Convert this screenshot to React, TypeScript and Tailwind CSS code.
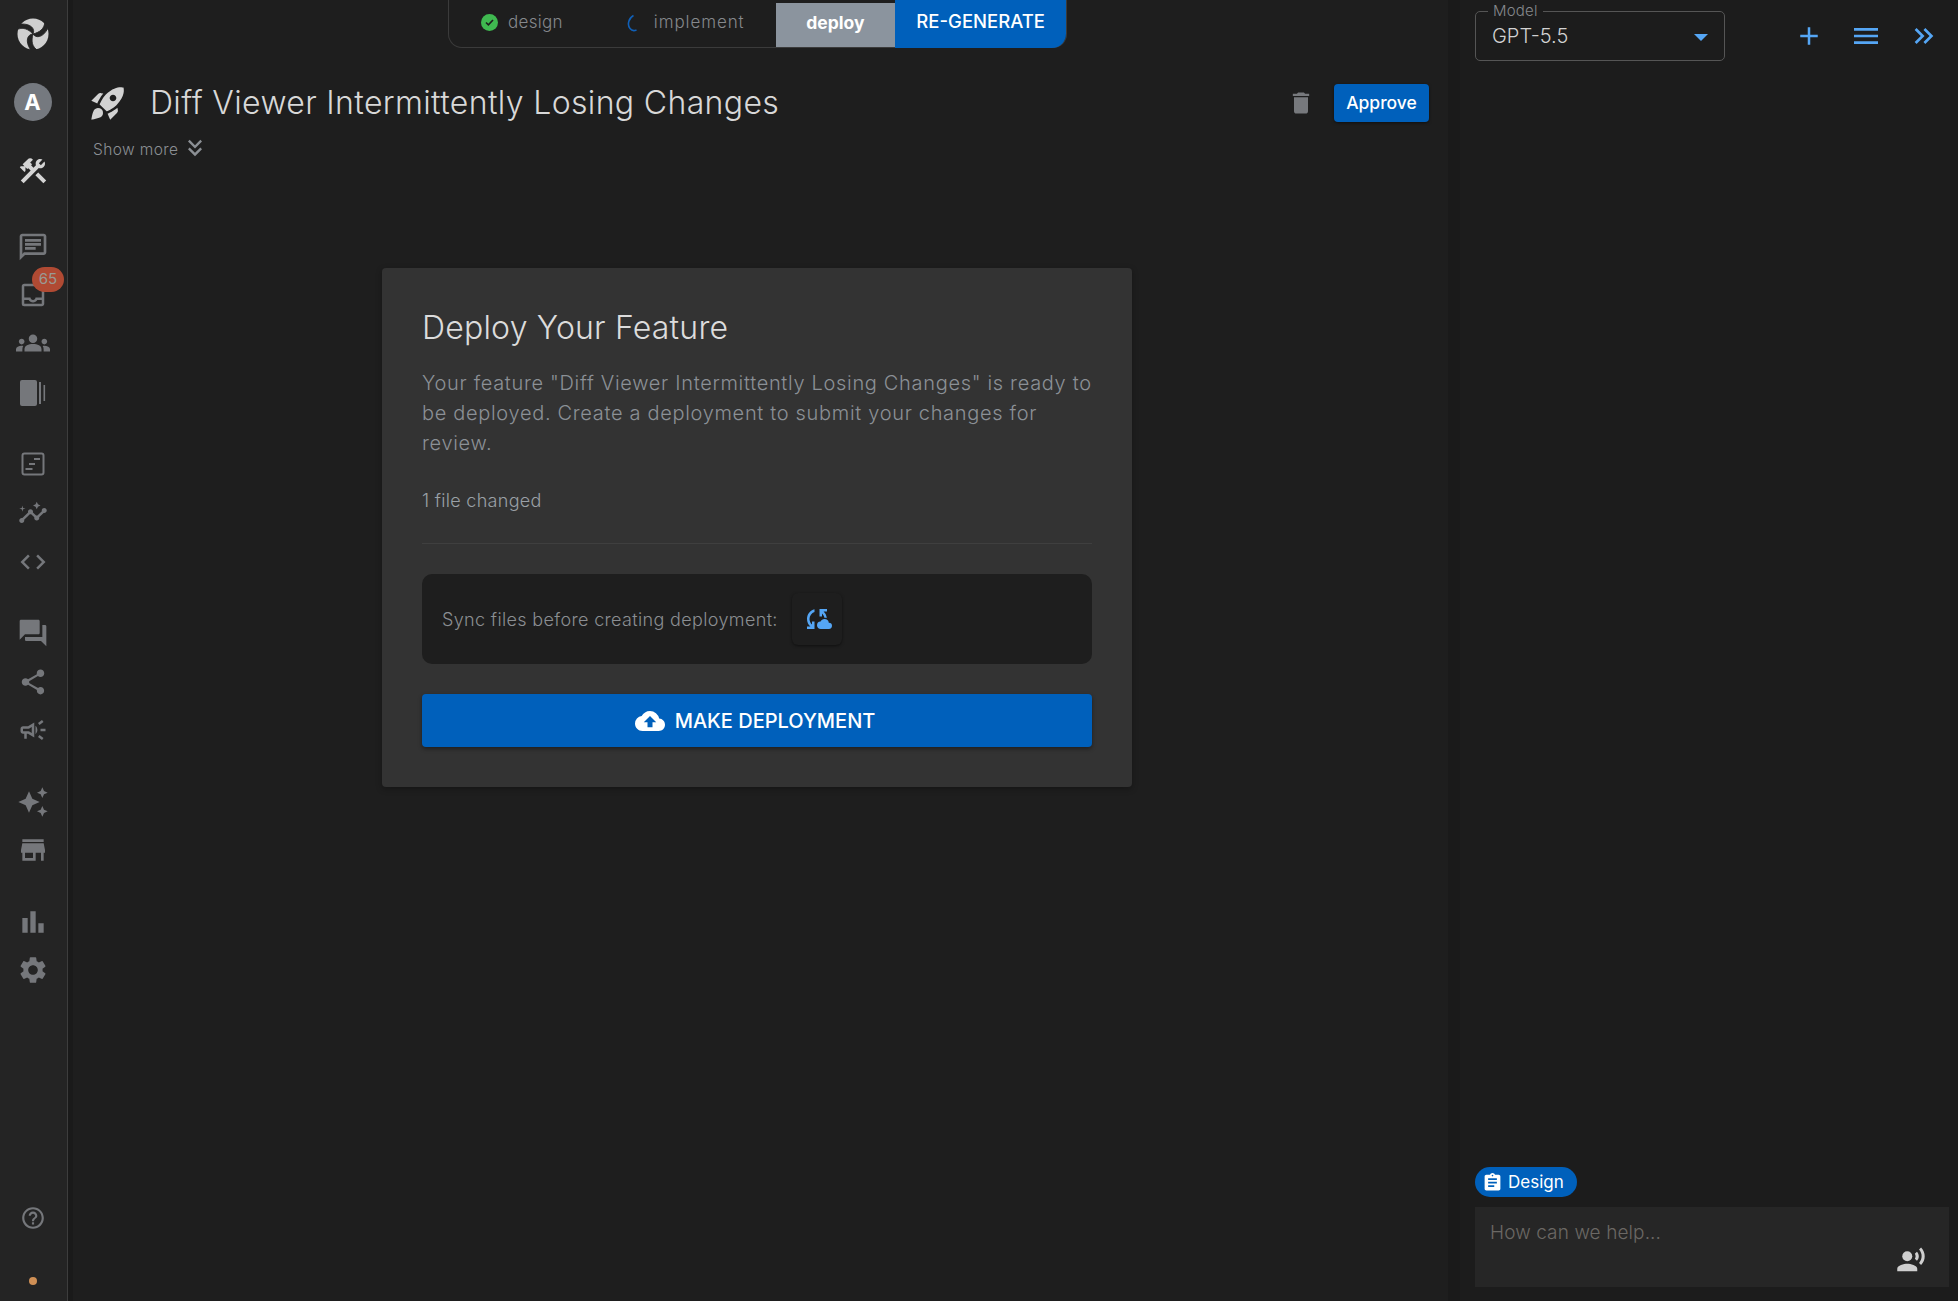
import type { ReactNode } from "react";
import {
  MdAdd,
  MdAssignment,
  MdAutoAwesome,
  MdBarChart,
  MdCloudSync,
  MdCloudUpload,
  MdCode,
  MdConstruction,
  MdDelete,
  MdForum,
  MdGroups,
  MdHelpOutline,
  MdInsights,
  MdKeyboardDoubleArrowDown,
  MdKeyboardDoubleArrowRight,
  MdMenu,
  MdOutlineCampaign,
  MdOutlineChat,
  MdOutlineInbox,
  MdRecordVoiceOver,
  MdRocketLaunch,
  MdSettings,
  MdShare,
  MdStore,
} from "react-icons/md";

const font = "font-['Inter','Liberation_Sans',sans-serif]";

function LogoIcon() {
  return (
    <svg width="32" height="32" viewBox="0 0 32 32">
      <circle cx="16" cy="16" r="15.5" fill="#cfcfcf" />
      {[0, 120, 240].map((deg) => (
        <path
          key={deg}
          d="M16 16 C18.5 11 14 5.5 4 6 L1 3 L-1 12 C6 8.5 11 11 16 16 Z"
          fill="#242424"
          stroke="#242424"
          strokeWidth="0.8"
          transform={`rotate(${deg} 16 16)`}
        />
      ))}
    </svg>
  );
}

function PanelIcon() {
  return (
    <svg width="28" height="28" viewBox="0 0 28 28" fill="#75777b">
      <rect x="1" y="1" width="17" height="26" rx="2" />
      <rect x="20" y="3" width="2" height="22" />
      <rect x="24.5" y="6" width="1.6" height="16" />
    </svg>
  );
}

function ArticleIcon() {
  return (
    <svg width="24" height="24" viewBox="0 0 24 24" fill="none" stroke="#75777b" strokeWidth="2">
      <rect x="1.5" y="1.5" width="21" height="21" rx="2" />
      <path d="M13 7h6M8 12h6M4.5 17h7" />
    </svg>
  );
}

function NavIcon({ children, className }: { children: ReactNode; className: string }) {
  return (
    <div className={`relative flex w-full items-center justify-center text-[#75777b] ${className}`}>
      {children}
    </div>
  );
}

function Sidebar() {
  return (
    <aside className="flex h-full w-[68px] shrink-0 flex-col items-center border-r border-[#3d3d3d] bg-[#242424] pr-[2px]">
      <NavIcon className="mt-[18px] h-8">
        <LogoIcon />
      </NavIcon>
      <NavIcon className="mt-[33px] h-9.5">
        <div className={`flex h-[38px] w-[38px] items-center justify-center rounded-full bg-[#75797f] text-[22px] font-bold text-white ${font}`}>
          A
        </div>
      </NavIcon>
      <NavIcon className="mt-[34px] h-8 text-[#d4d4d4]">
        <MdConstruction size={32} />
      </NavIcon>
      <NavIcon className="mt-[44px] h-8">
        <MdOutlineChat size={32} />
      </NavIcon>
      <NavIcon className="mt-[15px] h-[34px]">
        <MdOutlineInbox size={30} />
        <span className={`absolute left-[32px] top-[-11px] flex h-[25px] w-[32px] items-center justify-center rounded-full bg-[#b04a33] text-[15px] text-[#9a9a94] ${font}`}>
          65
        </span>
      </NavIcon>
      <NavIcon className="mt-[15px] h-8">
        <MdGroups size={34} />
      </NavIcon>
      <NavIcon className="mt-[18px] h-8">
        <PanelIcon />
      </NavIcon>
      <NavIcon className="mt-[43px] h-6">
        <ArticleIcon />
      </NavIcon>
      <NavIcon className="mt-[23px] h-7">
        <MdInsights size={30} />
      </NavIcon>
      <NavIcon className="mt-[23px] h-6">
        <MdCode size={30} />
      </NavIcon>
      <NavIcon className="mt-[43px] h-8">
        <MdForum size={32} />
      </NavIcon>
      <NavIcon className="mt-[17px] h-8">
        <MdShare size={30} />
      </NavIcon>
      <NavIcon className="mt-[16px] h-8">
        <MdOutlineCampaign size={30} />
      </NavIcon>
      <NavIcon className="mt-[40px] h-8">
        <MdAutoAwesome size={32} />
      </NavIcon>
      <NavIcon className="mt-[16px] h-8">
        <MdStore size={32} />
      </NavIcon>
      <NavIcon className="mt-[40px] h-8">
        <MdBarChart size={32} />
      </NavIcon>
      <NavIcon className="mt-[16px] h-8">
        <MdSettings size={32} />
      </NavIcon>
      <NavIcon className="mt-[220px] h-6 text-[#8b8f93]">
        <MdHelpOutline size={26} />
      </NavIcon>
      <div className="mt-[47px] h-2 w-2 rounded-full bg-[#cf8f55]" />
    </aside>
  );
}

function Tabs() {
  return (
    <div className={`ml-[375px] flex h-[48px] w-[619px] rounded-b-[14px] border border-t-0 border-[#3b3b3b] ${font}`}>
      <div className="flex w-[145px] items-center pb-[2px] pl-[32px] text-[17px] font-light tracking-[0.3px] text-[#85888c]">
        <span className="relative mr-[10px] flex h-[17px] w-[17px] items-center justify-center rounded-full bg-[#3fb950]">
          <svg width="11" height="11" viewBox="0 0 11 11" fill="none" stroke="#1e1e1e" strokeWidth="1.6">
            <path d="M2 5.5l2.4 2.4L9 3" />
          </svg>
        </span>
        design
      </div>
      <div className="flex w-[182px] items-center pb-[2px] pl-[32px] text-[17px] font-light tracking-[0.9px] text-[#85888c]">
        <svg width="16" height="18" viewBox="0 0 16 18" fill="none" stroke="#1060b8" strokeWidth="1.6" className="mr-[12px]">
          <path d="M7.5 1.5 C2.5 4 1 11 4 14.5 C5.5 16.5 8 17 10.5 16" />
        </svg>
        implement
      </div>
      <div className="mt-[3px] flex w-[120px] items-center justify-center bg-[#8b949e] pb-[4px] text-[17.5px] font-bold text-white">
        deploy
      </div>
      <div className="-mb-px flex w-[171px] items-center justify-center rounded-br-[14px] bg-[#0060bb] pb-[5px] text-[18.5px] font-medium text-white">
        RE-GENERATE
      </div>
    </div>
  );
}

function DeployCard() {
  return (
    <div className={`ml-[309px] mt-[104px] h-[519px] w-[750px] rounded-[4px] bg-[#333333] px-[40px] pt-[40px] shadow-[0_2px_6px_rgba(0,0,0,0.3)] ${font}`}>
      <h2 className="text-[32px] leading-[40px] font-light tracking-[0.2px] text-[#dcdcdc]">Deploy Your Feature</h2>
      <p className="mt-[20px] text-[20px] leading-[30px] font-light tracking-[0.68px] text-[#8b9096]">
        Your feature "Diff Viewer Intermittently Losing Changes" is ready to be deployed. Create a deployment to submit your changes for review.
      </p>
      <p className="mt-[31px] text-[18px] leading-[24px] font-light tracking-[0.3px] text-[#9aa0a6]">1 file changed</p>
      <div className="mt-[30px] border-t border-[#3f3f3f]" />
      <div className="mt-[30px] flex h-[90px] items-center rounded-[10px] bg-[#1e1e1e] pl-[20px]">
        <span className="text-[18px] font-light tracking-[0.35px] text-[#8b8e92]">Sync files before creating deployment:</span>
        <div className="ml-[14px] flex h-[52px] w-[50px] items-center justify-center rounded-[6px] bg-[#1e1e1e] text-[#55a6f5] shadow-[0_1px_3px_rgba(0,0,0,0.5)]">
          <MdCloudSync size={30} />
        </div>
      </div>
      <div className="mt-[30px] flex h-[53px] items-center justify-center gap-[10px] rounded-[4px] bg-[#0060bb] pr-[4px] text-[20px] font-medium text-white shadow-[0_2px_4px_rgba(0,0,0,0.4)]">
        <MdCloudUpload size={30} />
        MAKE DEPLOYMENT
      </div>
    </div>
  );
}

function MainPanel() {
  return (
    <main className="flex h-full w-[1380px] shrink-0 flex-col border-l-[5px] border-[#1a1a1a] bg-[#1e1e1e]">
      <Tabs />
      <div className="ml-[15px] mt-[35px] flex h-[40px] items-center">
        <MdRocketLaunch size={40} className="text-[#d2d2d2]" />
        <h1 className={`ml-[22px] text-[32px] font-light tracking-[0.35px] text-[#d8d8d8] ${font}`}>
          Diff Viewer Intermittently Losing Changes
        </h1>
        <MdDelete size={28} className="ml-auto mr-px text-[#77797d]" />
        <div className={`ml-[18px] mr-[19px] flex h-[38px] w-[95px] items-center justify-center rounded-[4px] bg-[#0060bb] text-[17.5px] font-medium text-white shadow-[0_1px_3px_rgba(0,0,0,0.5)] ${font}`}>
          Approve
        </div>
      </div>
      <div className={`ml-[20px] mt-[13px] flex h-[28px] items-center text-[15.5px] font-light tracking-[0.4px] text-[#8b8f94] ${font}`}>
        Show more
        <MdKeyboardDoubleArrowDown size={28} className="ml-[3px] -translate-y-[2px] text-[#8b8f94]" />
      </div>
      <DeployCard />
    </main>
  );
}

function RightPanel() {
  return (
    <section className={`flex h-full flex-1 flex-col border-l-[12px] border-[#1a1a1a] bg-[#1c1c1c] pl-[15px] pr-[9px] ${font}`}>
      <div className="flex items-start">
        <div className="relative mt-[11px] flex h-[50px] w-[250px] items-center rounded-[5px] border border-[#555555] pl-[16px]">
          <span className="absolute left-[12px] top-[-10px] bg-[#1c1c1c] px-[5px] text-[15px] leading-[18px] font-light tracking-[0.2px] text-[#85888c]">Model</span>
          <span className="text-[20px] font-light text-[#d2d2d2]">GPT-5.5</span>
          <svg width="14" height="7" viewBox="0 0 14 7" className="absolute left-[218px] top-[22px]">
            <path d="M0 0h14L7 7z" fill="#55a6f5" />
          </svg>
        </div>
        <div className="mt-[20px] flex items-center text-[#55a6f5]">
          <MdAdd size={30} className="ml-[69px]" />
          <MdMenu size={32} className="ml-[26px]" />
          <MdKeyboardDoubleArrowRight size={32} className="ml-[26px]" />
        </div>
      </div>
      <div className="mt-auto flex h-[30px] w-[102px] items-center rounded-full bg-[#0060bb] pl-[7px] pt-px text-[17px] text-white">
        <MdAssignment size={21} />
        <span className="ml-[5px]">Design</span>
      </div>
      <div className="relative mb-[14px] mt-[10px] h-[80px] w-[474px] bg-[#262626] pl-[15px] pt-[13px] text-[19px] leading-[26px] font-light tracking-[0.1px] text-[#6b6864]">
        How can we help...
        <MdRecordVoiceOver size={30} className="absolute left-[421px] top-[38px] text-[#cfcfcf]" />
      </div>
    </section>
  );
}

export default function App() {
  return (
    <div className="flex h-screen w-full overflow-hidden bg-[#1e1e1e]">
      <Sidebar />
      <MainPanel />
      <RightPanel />
    </div>
  );
}
